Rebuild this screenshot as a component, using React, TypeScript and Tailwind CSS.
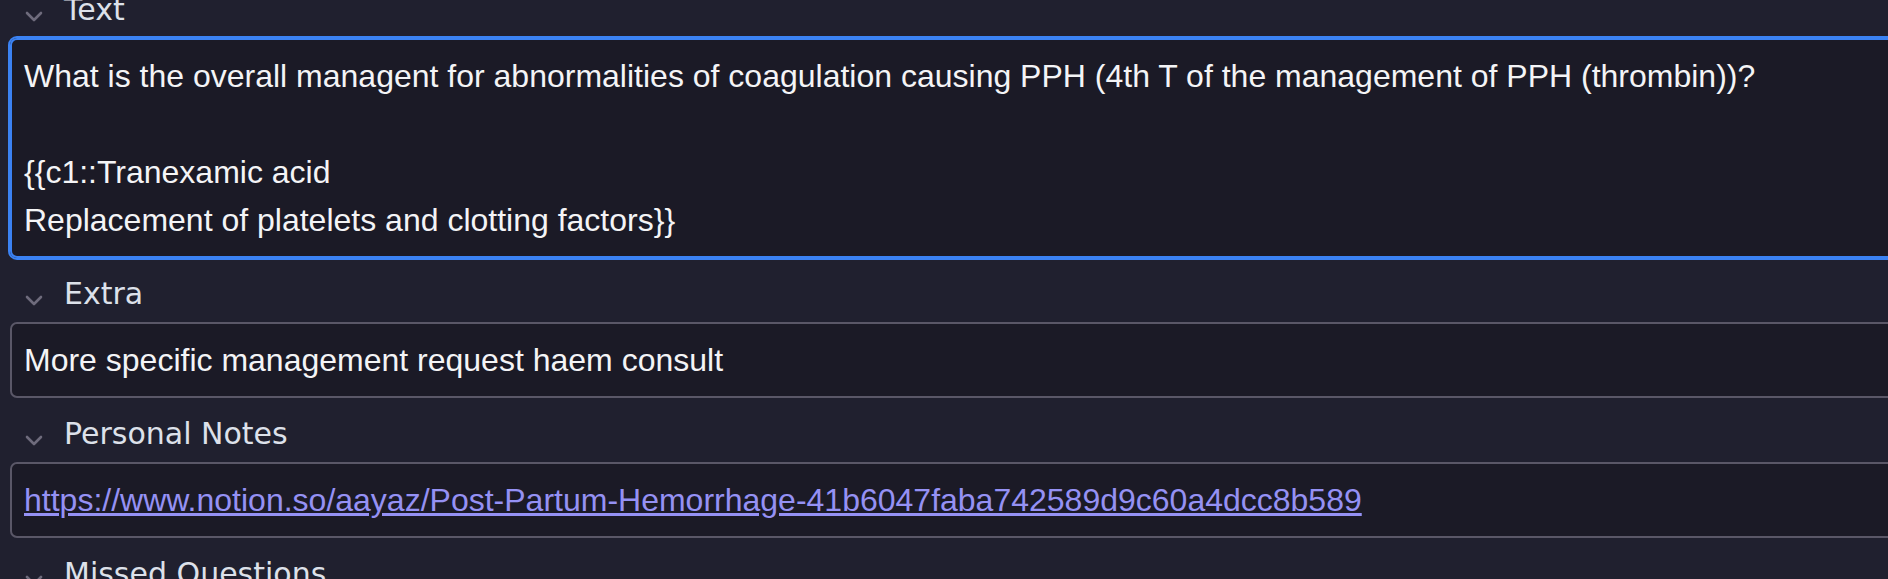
import React from "react";

function Chevron() {
  return (
    <svg width="18" height="12" viewBox="0 0 18 12" className="shrink-0">
      <polyline points="2,2 9,9 16,2" fill="none" stroke="#6e6b7c" strokeWidth="2.6" strokeLinecap="round" strokeLinejoin="round" />
    </svg>
  );
}

function Label({ text }: { text: string }) {
  return (
    <div className="h-[64px] flex items-end pb-[10px]">
      <div className="w-[25px] shrink-0" />
      <div className="mb-[5px]"><Chevron /></div>
      <div className="w-[21px] shrink-0" />
      <span className="text-[30px] text-[#dde1ea] leading-[36px]" style={{ fontFamily: '"DejaVu Sans", sans-serif' }}>
        {text}
      </span>
    </div>
  );
}

function Field({ children, focused = false }: { children?: React.ReactNode; focused?: boolean }) {
  return (
    <div
      className={
        focused
          ? "ml-[10px] w-[1900px] rounded-[7px] border-2 border-[#3b82f3] outline-2 outline-[#3b82f3] bg-[#1b1a26] px-[12px] py-[12px] text-[32px] leading-[48px] text-[#f4f4f6]"
          : "ml-[10px] w-[1900px] rounded-[7px] border-2 border-[#5a5767] bg-[#1b1a26] px-[12px] py-[12px] text-[32px] leading-[48px] text-[#f4f4f6]"
      }
      style={{ fontFamily: '"Liberation Sans", Arial, sans-serif' }}
    >
      {children}
    </div>
  );
}

export default function App() {
  return (
    <div className="w-[1888px] h-[579px] overflow-hidden bg-[#20202f]">
      <div className="mt-[-26px] flex flex-col">
        <Label text="Text" />
        <Field focused>
          <div>What is the overall managent for abnormalities of coagulation causing PPH (4th T of the management of PPH (thrombin))?</div>
          <div><br /></div>
          <div>{"{{c1::Tranexamic acid"}</div>
          <div>{"Replacement of platelets and clotting factors}}"}</div>
        </Field>
        <Label text="Extra" />
        <Field>
          <div>More specific management request haem consult</div>
        </Field>
        <Label text="Personal Notes" />
        <Field>
          <div>
            <a className="text-[#9591f4] underline">https://www.notion.so/aayaz/Post-Partum-Hemorrhage-41b6047faba742589d9c60a4dcc8b589</a>
          </div>
        </Field>
        <Label text="Missed Questions" />
        <Field>
          <div><br /></div>
        </Field>
      </div>
    </div>
  );
}
